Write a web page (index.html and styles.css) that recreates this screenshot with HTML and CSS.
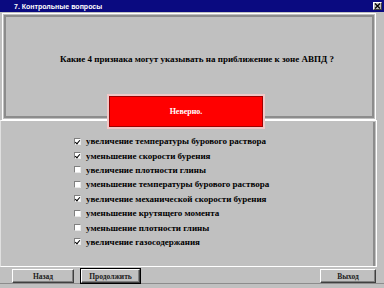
FILE: index.html
```html
<!DOCTYPE html>
<html>
<head>
<meta charset="utf-8">
<link rel="stylesheet" href="styles.css">
</head>
<body>
<div class="window">
  <div class="titlebar">
    <span class="title">7. Контрольные вопросы</span>
    <span class="close"><svg width="7" height="6" viewBox="0 0 7 6"><path d="M1 0.5 L6 5.5 M6 0.5 L1 5.5" stroke="#000" stroke-width="1.2"/></svg></span>
  </div>
  <div class="top">
    <div class="top-inner">
      <p class="question">Какие 4 признака могут указывать на приближение к зоне АВПД ?</p>
    </div>
  </div>
  <div class="bottom">
    <div class="bottom-inner">
      <ul class="answers">
        <li><span class="cb on"></span>увеличение температуры бурового раствора</li>
        <li><span class="cb on"></span>уменьшение скорости бурения</li>
        <li><span class="cb"></span>увеличение плотности глины</li>
        <li><span class="cb"></span>уменьшение температуры бурового раствора</li>
        <li><span class="cb on"></span>увеличение механической скорости бурения</li>
        <li><span class="cb"></span>уменьшение крутящего момента</li>
        <li><span class="cb"></span>уменьшение плотности глины</li>
        <li><span class="cb on"></span>увеличение газосодержания</li>
      </ul>
    </div>
  </div>
  <div class="buttons">
    <button class="btn back">Назад</button>
    <button class="btn next">Продолжить</button>
    <button class="btn exit">Выход</button>
  </div>
  <div class="alert">Неверно.</div>
</div>
</body>
</html>
```
FILE: styles.css
```css
* { box-sizing: border-box; }
html, body { margin: 0; padding: 0; }
body {
  width: 384px;
  height: 288px;
  overflow: hidden;
  background: #c0c0c0;
  font-family: "Liberation Serif", "Times New Roman", serif;
}
.window {
  position: relative;
  width: 384px;
  height: 288px;
  display: flex;
  flex-direction: column;
}
.titlebar {
  height: 12px;
  background: #0a0a80;
  display: flex;
  align-items: center;
  padding-left: 14px;
  padding-right: 2px;
}
.title {
  color: #fff;
  font-family: "Liberation Sans", Arial, sans-serif;
  font-weight: bold;
  font-size: 7px;
  flex: 1;
}
.close {
  width: 9px;
  height: 8px;
  background: #c0c0c0;
  border: 1px solid;
  border-color: #fff #404040 #404040 #fff;
  display: flex;
  align-items: center;
  justify-content: center;
}
.close svg { display: block; }
.top {
  margin: 1px 8px 0 2px;
  border: 1px solid #fff;
  padding: 1px;
}
.top-inner {
  height: 103px;
  border: 2px solid #8c8c8c;
  padding: 37px 0 0 16px;
}
.question {
  margin: 0;
  text-align: center;
  font-weight: bold;
  font-size: 9px;
  line-height: 11px;
  color: #000;
}
.bottom {
  margin: 0 7px 0 0;
  border: 1px solid #fff;
  border-left-color: #e0e0e0;
  padding: 1px 1px 0 1px;
  height: 147px;
}
.bottom-inner {
  height: 100%;
  border-right: 2px solid #8c8c8c;
  padding: 12px 0 0 72px;
}
.answers {
  list-style: none;
  margin: 0;
  padding: 0;
}
.answers li {
  display: flex;
  align-items: center;
  height: 14.4px;
  font-weight: bold;
  font-size: 9px;
  color: #000;
}
.cb {
  width: 7px;
  height: 7px;
  margin-right: 5px;
  background: #fff;
  border: 1px solid;
  border-color: #808080 #e8e8e8 #e8e8e8 #808080;
  position: relative;
}
.cb.on::after {
  content: "";
  position: absolute;
  left: 1px;
  top: 0px;
  width: 2px;
  height: 4px;
  border: solid #000;
  border-width: 0 1px 1px 0;
  transform: rotate(40deg);
}
.buttons {
  display: flex;
  align-items: center;
  padding: 2px 8px 0 12px;
  height: 17px;
  border-bottom: 1px solid #8c8c8c;
}
.btn {
  height: 14px;
  padding: 0;
  background: #c0c0c0;
  border: 1px solid;
  border-color: #fff #404040 #404040 #fff;
  box-shadow: inset -1px -1px 0 #808080;
  font-family: "Liberation Serif", "Times New Roman", serif;
  font-weight: bold;
  font-size: 7.5px;
  color: #202020;
}
.back { width: 62px; }
.next {
  width: 59px;
  margin-left: 7px;
  outline: 1px solid #000;
}
.exit {
  width: 56px;
  margin-left: auto;
}
.alert {
  position: absolute;
  left: 107px;
  top: 94px;
  width: 158px;
  height: 35px;
  background: #ff0000;
  border: 2px solid #f0c8c8;
  box-shadow: inset 0 0 0 1px #a00000;
  color: #fff;
  font-weight: bold;
  font-size: 8px;
  display: flex;
  align-items: center;
  justify-content: center;
}
```
